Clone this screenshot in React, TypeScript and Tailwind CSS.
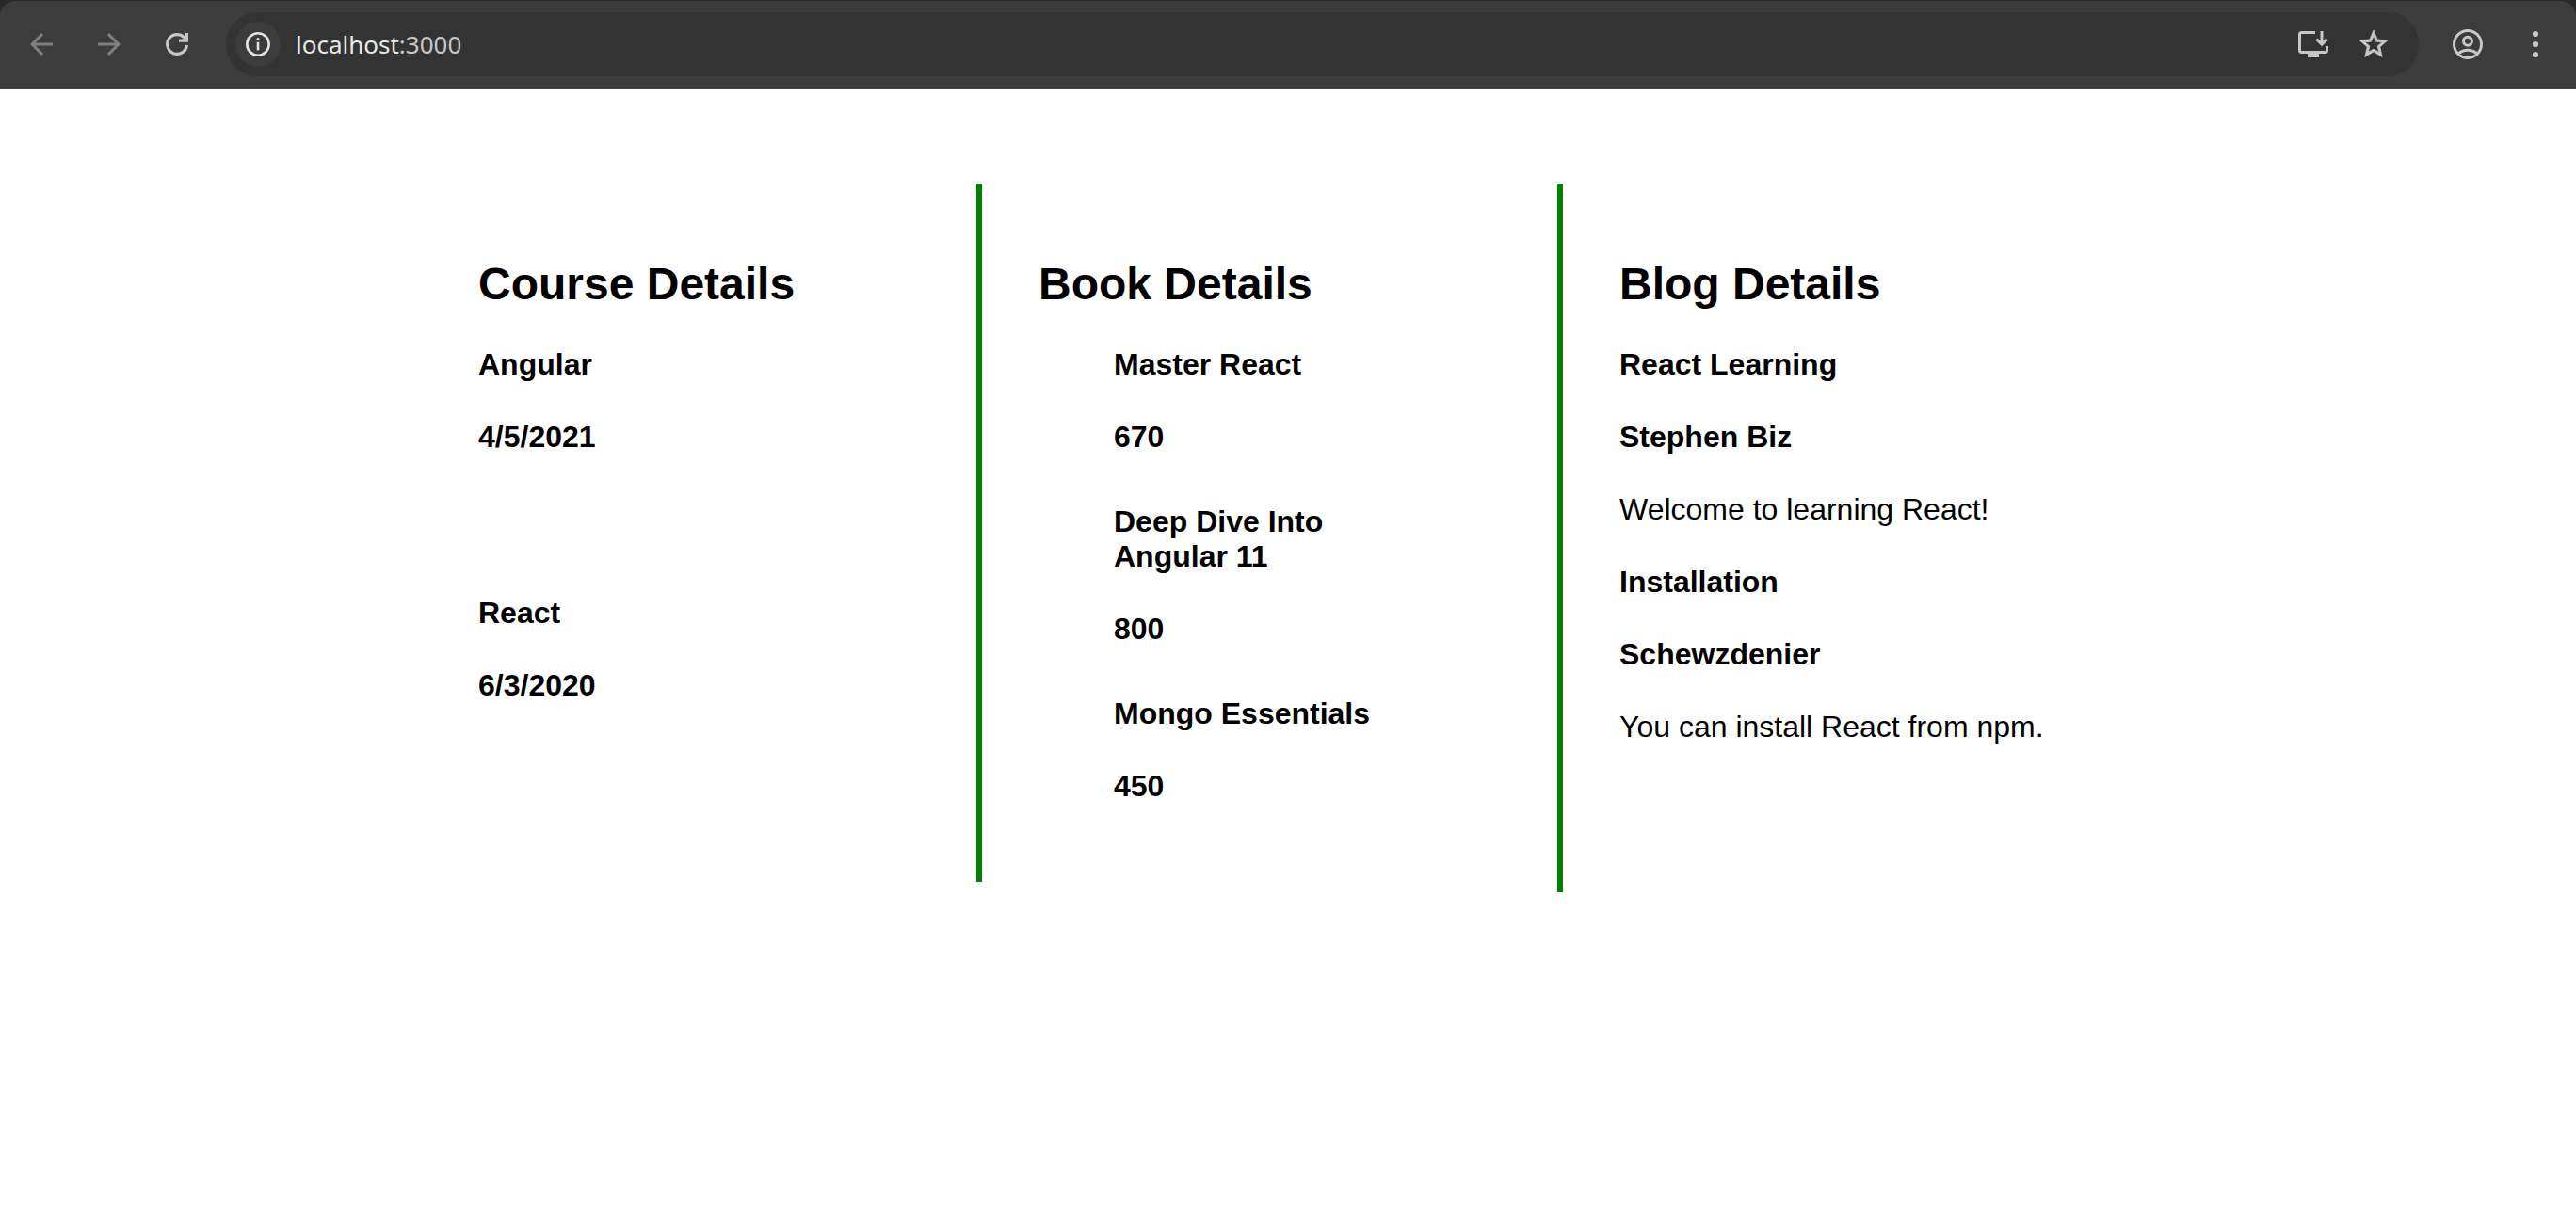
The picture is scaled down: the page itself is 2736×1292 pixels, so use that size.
import type { ReactNode } from "react";

const courses = [
  { id: 1, name: "Angular", date: "4/5/2021" },
  { id: 2, name: "React", date: "6/3/2020" },
];

const books = [
  { id: 1, name: "Master React", price: 670 },
  { id: 2, name: "Deep Dive Into Angular 11", price: 800 },
  { id: 3, name: "Mongo Essentials", price: 450 },
];

const blogs = [
  { id: 1, title: "React Learning", author: "Stephen Biz", body: "Welcome to learning React!" },
  { id: 2, title: "Installation", author: "Schewzdenier", body: "You can install React from npm." },
];

function IconButton({ label, className = "", children }: { label: string; className?: string; children: ReactNode }) {
  return (
    <button type="button" aria-label={label} className={`flex size-12 shrink-0 items-center justify-center rounded-full ${className}`}>
      {children}
    </button>
  );
}

function BackIcon() {
  return (
    <svg viewBox="0 0 24 24" className="size-9" fill="currentColor" aria-hidden="true">
      <path d="M7.825 13l5.6 5.6L12 20l-8-8 8-8 1.425 1.4-5.6 5.6H20v2z" />
    </svg>
  );
}

function ForwardIcon() {
  return (
    <svg viewBox="0 0 24 24" className="size-9" fill="currentColor" aria-hidden="true">
      <path d="M16.175 13H4v-2h12.175l-5.6-5.6L12 4l8 8-8 8-1.425-1.4z" />
    </svg>
  );
}

function ReloadIcon() {
  return (
    <svg viewBox="0 0 36 36" className="size-9" fill="none" stroke="currentColor" strokeWidth="3.2" aria-hidden="true">
      <path d="M28.400 19A10.400 10.400 0 1 1 26.800 12.400" />
      <path d="M28.400 6v8.200H20" />
    </svg>
  );
}

function InfoIcon() {
  return (
    <svg viewBox="0 0 32 32" className="size-8" fill="none" stroke="currentColor" aria-hidden="true">
      <circle cx="16" cy="16" r="11.700" strokeWidth="2.600" />
      <path d="M16 13.800v8.600" strokeWidth="2.600" />
      <circle cx="16" cy="10.600" r="1.500" fill="currentColor" stroke="none" />
    </svg>
  );
}

function InstallIcon() {
  return (
    <svg viewBox="0 0 40 40" className="size-10" fill="none" stroke="currentColor" strokeWidth="3" aria-hidden="true">
      <path d="M22 7.500H7.500a2 2 0 0 0-2 2V26.500a2 2 0 0 0 2 2H32.500a2 2 0 0 0 2-2V22" />
      <path d="M14 28h12v6H14z" fill="currentColor" stroke="none" />
      <path d="M29 6v14M23.400 14.600l5.600 5.600 5.600-5.600" />
    </svg>
  );
}

function StarIcon() {
  return (
    <svg viewBox="0 0 24 24" className="size-9" fill="currentColor" stroke="currentColor" strokeWidth="0.500" aria-hidden="true">
      <path d="M22 9.240l-7.190-.62L12 2 9.190 8.630 2 9.240l5.460 4.730L5.820 21 12 17.270 18.180 21l-1.630-7.030zM12 15.400l-3.760 2.270 1-4.280-3.320-2.880 4.380-.38L12 6.100l1.710 4.040 4.380.38-3.320 2.880 1 4.280z" />
    </svg>
  );
}

function ProfileIcon() {
  return (
    <svg viewBox="0 0 40 40" className="size-10" fill="none" stroke="currentColor" strokeWidth="3" aria-hidden="true">
      <circle cx="20" cy="20" r="14.500" />
      <circle cx="20" cy="16.700" r="4.500" />
      <path d="M10 30q4.500-3.800 10-3.800t10 3.800" />
    </svg>
  );
}

function MenuIcon() {
  return (
    <svg viewBox="0 0 40 40" className="size-10" fill="currentColor" aria-hidden="true">
      <circle cx="20" cy="9" r="3.100" />
      <circle cx="20" cy="20" r="3.100" />
      <circle cx="20" cy="31" r="3.100" />
    </svg>
  );
}

function Toolbar() {
  return (
    <header className="bg-[#282828] pt-px">
      <div className="flex h-[94px] items-center rounded-t-2xl border-b-2 border-[#484848] bg-[#3c3c3c] pr-[19px] pl-5 text-[#c7c7c7]">
        <nav aria-label="History" className="flex gap-6">
          <IconButton label="Back" className="text-[#808080]"><BackIcon /></IconButton>
          <IconButton label="Forward" className="text-[#808080]"><ForwardIcon /></IconButton>
          <IconButton label="Reload"><ReloadIcon /></IconButton>
        </nav>
        <div className="ml-7 flex h-[68px] flex-1 items-center rounded-full bg-[#333333] pr-6 pl-[10px]">
          <IconButton label="View site information" className="bg-[#3c3c3c] text-[#e3e3e3]"><InfoIcon /></IconButton>
          <a href="http://localhost:3000" className="ml-4 flex-1 font-['Noto_Sans',sans-serif] text-[26px] leading-9 text-[#c7c7c7]">
            <span className="text-[#e8e8e8]">localhost</span>:3000
          </a>
          <div className="flex gap-4">
            <IconButton label="Install app"><InstallIcon /></IconButton>
            <IconButton label="Bookmark this page"><StarIcon /></IconButton>
          </div>
        </div>
        <div className="ml-7 flex gap-6">
          <IconButton label="Profile"><ProfileIcon /></IconButton>
          <IconButton label="Menu"><MenuIcon /></IconButton>
        </div>
      </div>
    </header>
  );
}

function Column({ title, className = "", children }: { title: string; className?: string; children: ReactNode }) {
  return (
    <section className={`pt-[79px] ${className}`}>
      <h1 className="mb-10 text-[48px] leading-[55px] font-bold">{title}</h1>
      {children}
    </section>
  );
}

export default function App() {
  return (
    <div className="min-h-screen bg-white font-['Liberation_Sans',Arial,sans-serif] text-[32px] leading-[37px] text-black">
      <Toolbar />
      <main className="mx-auto mt-[100px] grid max-w-[1720px] grid-cols-[529fr_617fr_574fr] items-start">
        <Column title="Course Details">
          <div className="flex flex-col gap-[150px]">
            {courses.map((course) => (
              <article key={course.id} className="flex flex-col gap-10">
                <h2 className="font-bold">{course.name}</h2>
                <h3 className="font-bold">{course.date}</h3>
              </article>
            ))}
          </div>
        </Column>
        <Column title="Book Details" className="border-l-[6px] border-[#008000] pr-[150px] pb-[83px] pl-[60px]">
          <ul className="flex flex-col gap-[53px] pl-20">
            {books.map((book) => (
              <li key={book.id} className="flex flex-col gap-10">
                <h2 className="font-bold">{book.name}</h2>
                <h3 className="font-bold">{book.price}</h3>
              </li>
            ))}
          </ul>
        </Column>
        <Column title="Blog Details" className="border-l-[6px] border-[#008000] pb-[157px] pl-[60px]">
          <div className="flex flex-col gap-10">
            {blogs.map((blog) => (
              <article key={blog.id} className="flex flex-col gap-10">
                <h2 className="font-bold">{blog.title}</h2>
                <h3 className="font-bold">{blog.author}</h3>
                <p>{blog.body}</p>
              </article>
            ))}
          </div>
        </Column>
      </main>
    </div>
  );
}
